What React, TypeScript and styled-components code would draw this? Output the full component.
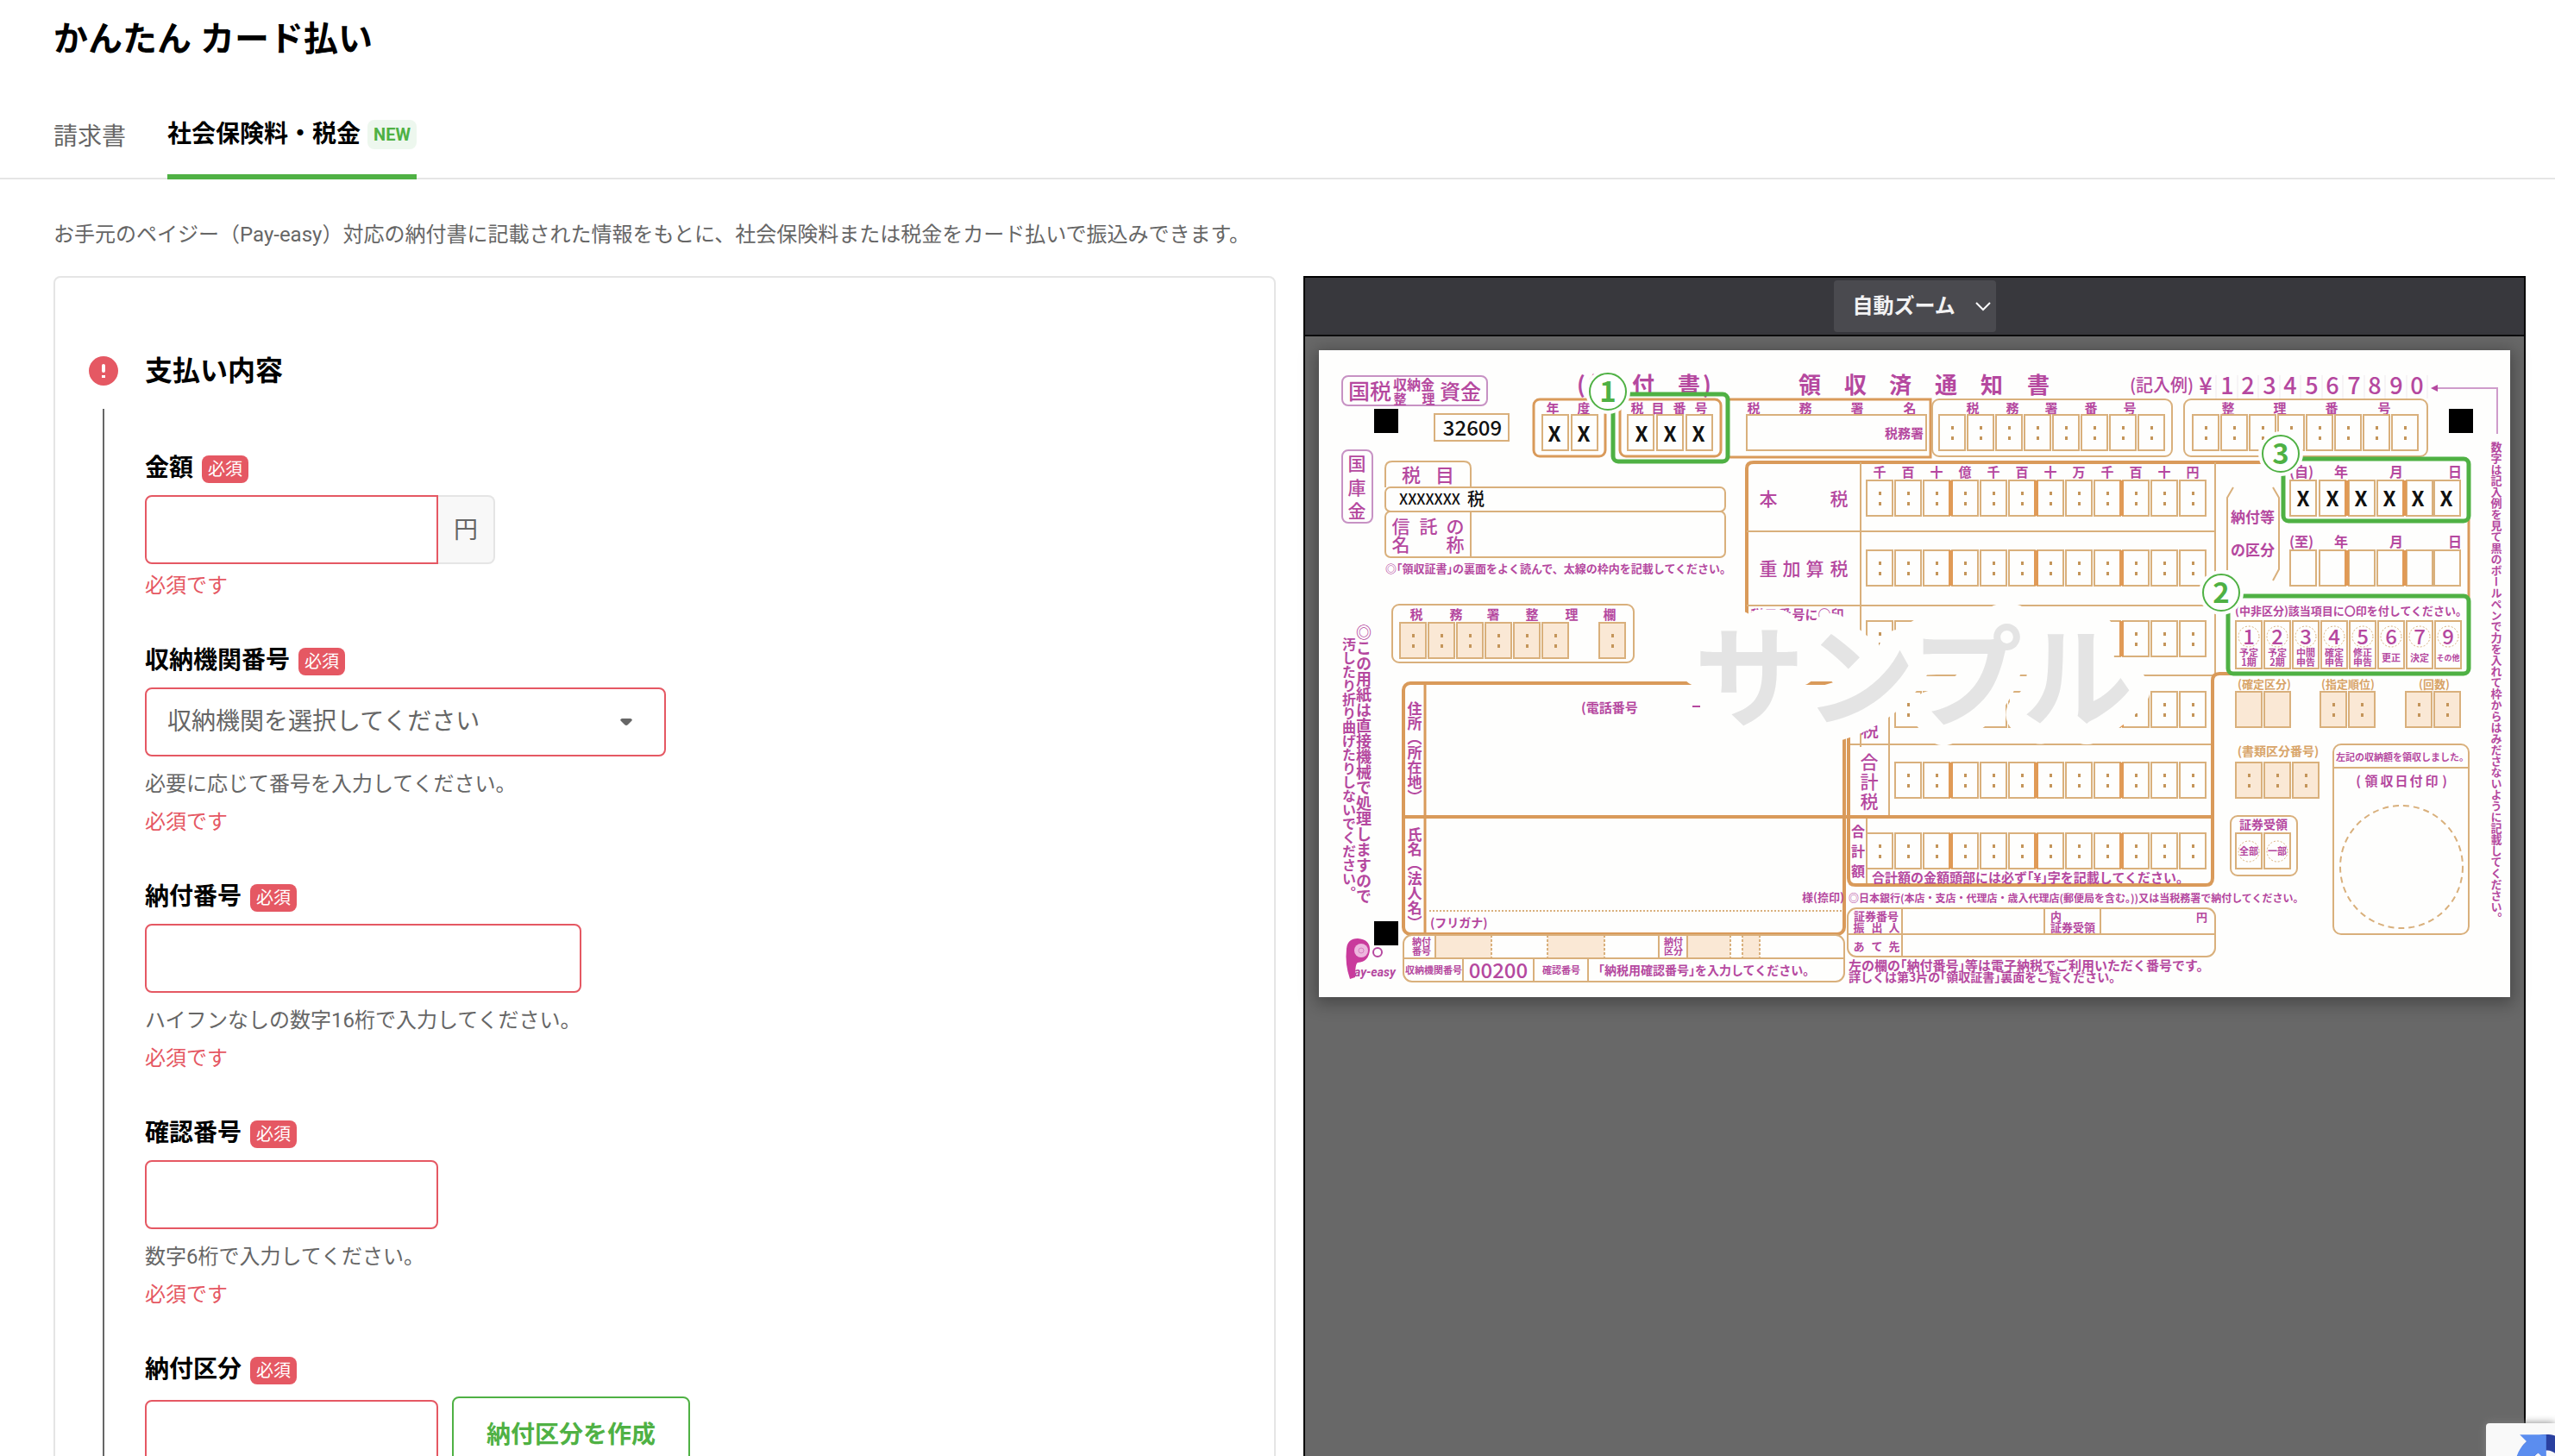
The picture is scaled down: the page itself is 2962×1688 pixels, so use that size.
import React from "react";
import styled, { createGlobalStyle } from "styled-components";

const GREEN = "#4fb144";
const RED = "#e55863";
const GRAY = "#666666";
const LINE = "#e5e5e5";

const GlobalStyle = createGlobalStyle`
  *, *::before, *::after { box-sizing: border-box; }
  body {
    margin: 0;
    background: #ffffff;
    color: #000000;
    font-family: Roboto, "Noto Sans CJK JP", sans-serif;
  }
  input, select, button { font-family: inherit; }
`;

const Page = styled.div`
  height: 100vh;
  overflow: hidden;
`;

const Title = styled.h1`
  margin: 0;
  padding: 16px 62px 30px;
  font-size: 40px;
  line-height: 60px;
  font-weight: 700;
`;

const Tabs = styled.nav`
  display: flex;
  gap: 48px;
  height: 102px;
  padding: 0 62px;
  border-bottom: 2px solid ${LINE};
`;

const Tab = styled.a<{ $active?: boolean }>`
  display: flex;
  align-items: center;
  gap: 8px;
  margin-bottom: -2px;
  padding-top: 3px;
  border-bottom: ${(p) => (p.$active ? `6px solid ${GREEN}` : "0")};
  color: ${(p) => (p.$active ? "#000000" : GRAY)};
  font-size: 28px;
  line-height: 40px;
  font-weight: ${(p) => (p.$active ? 700 : 400)};
  text-decoration: none;
`;

const NewBadge = styled.span`
  padding: 0 7px;
  border-radius: 8px;
  background: #edf7ee;
  color: ${GREEN};
  font-size: 20px;
  line-height: 34px;
`;

const Main = styled.main`
  padding: 40px 34px 0 62px;
`;

const Lead = styled.p`
  margin: 0 0 24px;
  color: ${GRAY};
  font-size: 24px;
  line-height: 48px;
`;

const Columns = styled.div`
  display: grid;
  grid-template-columns: 1fr 1fr;
  gap: 32px;
`;

const Card = styled.section`
  display: flex;
  gap: 30px;
  padding: 84px 38px;
  border: 2px solid ${LINE};
  border-radius: 8px;
`;

const StepRail = styled.div`
  display: flex;
  flex-direction: column;
  align-items: center;
  gap: 20px;
  width: 36px;
`;

const StepIcon = styled.div`
  display: flex;
  align-items: center;
  height: 48px;
`;

const StepLine = styled.div`
  flex: 1;
  width: 2px;
  background: ${GRAY};
`;

const StepBody = styled.form`
  flex: 1;
`;

const StepTitle = styled.h2`
  margin: 0 0 74px;
  font-size: 32px;
  line-height: 48px;
  font-weight: 700;
`;

const Fields = styled.div`
  display: flex;
  flex-direction: column;
  gap: 54px;
`;

const LabelRow = styled.label`
  display: flex;
  align-items: flex-start;
  gap: 10px;
  margin-bottom: 14px;
  font-size: 28px;
  line-height: 30px;
  font-weight: 700;
`;

const Required = styled.span`
  padding: 0 7px;
  border-radius: 8px;
  background: ${RED};
  color: #ffffff;
  font-size: 20px;
  line-height: 32px;
  font-weight: 400;
`;

const ControlRow = styled.div<{ $gap?: number }>`
  display: flex;
  align-items: center;
  gap: ${(p) => p.$gap ?? 0}px;
`;

const TextInput = styled.input<{ $wide?: boolean; $joined?: boolean }>`
  width: ${(p) => (p.$wide ? 506 : 340)}px;
  height: 80px;
  padding: 0 24px;
  border: 2px solid ${RED};
  border-radius: ${(p) => (p.$joined ? "8px 0 0 8px" : "8px")};
  background: #ffffff;
  font-size: 28px;
`;

const Unit = styled.span`
  display: flex;
  align-items: center;
  justify-content: center;
  width: 66px;
  height: 80px;
  padding-bottom: 4px;
  border: 2px solid ${LINE};
  border-left: 0;
  border-radius: 0 8px 8px 0;
  background: #f8f8f8;
  color: ${GRAY};
  font-size: 28px;
`;

const SelectBox = styled.div`
  position: relative;
  width: 604px;
`;

const Select = styled.select`
  appearance: none;
  width: 100%;
  height: 80px;
  padding: 0 64px 2px 24px;
  border: 2px solid ${RED};
  border-radius: 8px;
  background: #ffffff;
  color: ${GRAY};
  font-size: 28px;
`;

const Caret = styled.svg`
  position: absolute;
  top: 36px;
  right: 39px;
  pointer-events: none;
`;

const Help = styled.p`
  margin: 13px 0 0;
  color: ${GRAY};
  font-size: 24px;
  line-height: 38px;
`;

const ErrorText = styled.p`
  margin: 6px 0 -1px;
  color: ${RED};
  font-size: 24px;
  line-height: 38px;
`;

const OutlineButton = styled.button`
  height: 88px;
  padding: 0 38px 4px;
  border: 2px solid ${GREEN};
  border-radius: 8px;
  background: #ffffff;
  color: ${GREEN};
  font-size: 28px;
  font-weight: 700;
`;

const Viewer = styled.section`
  display: flex;
  flex-direction: column;
  border: 2px solid #000000;
  background: #686868;
`;

const Toolbar = styled.div`
  display: flex;
  align-items: center;
  justify-content: center;
  height: 68px;
  border-bottom: 2px solid #0c0c0d;
  background: #38383d;
`;

const ZoomBox = styled.div`
  position: relative;
  width: 188px;
`;

const ZoomSelect = styled.select`
  appearance: none;
  display: block;
  width: 100%;
  height: 60px;
  padding: 0 0 0 22px;
  border: 0;
  border-radius: 4px;
  background: #4a4a4f;
  color: #f2f2f3;
  font-size: 24px;
  font-weight: 700;
`;

const Chevron = styled.svg`
  position: absolute;
  top: 25px;
  right: 6px;
  pointer-events: none;
`;

const Sheet = styled.div`
  margin: 16px;
  background: #fefefd;
  box-shadow: 0 4px 18px 4px rgba(0, 0, 0, 0.3);

  svg { display: block; width: 100%; height: auto; }
`;

const Captcha = styled.div`
  position: fixed;
  right: 0;
  bottom: 0;
  width: 80px;
  height: 38px;
  padding: 13px 0 0 34px;
  overflow: hidden;
  border-radius: 4px 0 0 0;
  background: #f9f9f9;
`;

const CaptchaShadow = styled.div`
  position: fixed;
  right: 0;
  bottom: 0;
  width: 80px;
  height: 38px;
  border-radius: 4px 0 0 0;
  box-shadow: 0 0 10px #808080;
`;

/* ---- payment slip drawing ---- */

const PURPLE = "#b5489f";
const TAN = "#d9b07c";
const ORANGE = "#d99a5a";
const PEACH = "#fae8d5";

const weightFor = (s: number) => (s < 19 ? 700 : 500);
const drop = (s: number) => Math.round(s * 0.37);

type TxtProps = {
  x: number;
  y: number;
  s: number;
  children: string;
  c?: string;
  w?: number;
  mid?: boolean;
};

const Txt = ({ x, y, s, children, c = PURPLE, w = weightFor(s), mid }: TxtProps) => (
  <text x={x} y={y + drop(s)} fontSize={s} fontWeight={w} fill={c} textAnchor={mid ? "middle" : "start"}>
    {children}
  </text>
);

type SpreadProps = { t: string; xs: number[]; y: number; s: number; c?: string; w?: number };

const Spread = ({ t, xs, y, s, c = PURPLE, w = weightFor(s) }: SpreadProps) => (
  <text x={xs.join(" ")} y={y + drop(s)} fontSize={s} fontWeight={w} fill={c} textAnchor="middle">
    {t}
  </text>
);

type ColumnProps = { t: string; x: number; ys: number[]; s: number };

const Column = ({ t, x, ys, s }: ColumnProps) => (
  <text
    x={ys.map(() => x).join(" ")}
    y={ys.map((y) => y + drop(s)).join(" ")}
    fontSize={s}
    fontWeight={weightFor(s)}
    fill={PURPLE}
    textAnchor="middle"
  >
    {t}
  </text>
);

const Vertical = ({ x, y, s, children }: { x: number; y: number; s: number; children: string }) => (
  <text x={x} y={y} fontSize={s} fontWeight={weightFor(s)} fill={PURPLE} style={{ writingMode: "vertical-rl" }}>
    {children}
  </text>
);

const steps = (start: number, pitch: number, n: number) =>
  Array.from({ length: n }, (_, i) => Math.round(start + pitch * i));

type CellsProps = { xs: number[]; y: number; h?: number; dots?: boolean; fill?: string };

const Cells = ({ xs, y, h = 41, dots, fill = "none" }: CellsProps) => (
  <g>
    {xs.map((x) => (
      <g key={x}>
        <rect x={x} y={y} width={30} height={h} fill={fill} stroke={TAN} strokeWidth={2} />
        {dots && (
          <>
            <rect x={x + 14} y={y + 13} width={3} height={4} fill="#c4955a" />
            <rect x={x + 14} y={y + 25} width={3} height={4} fill="#c4955a" />
          </>
        )}
      </g>
    ))}
  </g>
);

type BoxProps = { x: number; y: number; x2: number; y2: number; r?: number; c?: string; sw?: number; fill?: string };

const Box = ({ x, y, x2, y2, r = 0, c = TAN, sw = 2, fill = "none" }: BoxProps) => (
  <rect x={x} y={y} width={x2 - x} height={y2 - y} rx={r} fill={fill} stroke={c} strokeWidth={sw} />
);

const Path = ({ d, c = TAN, sw = 2, dash }: { d: string; c?: string; sw?: number; dash?: string }) => (
  <path d={d} fill="none" stroke={c} strokeWidth={sw} strokeDasharray={dash} />
);

const Marker = ({ x, y, n }: { x: number; y: number; n: string }) => (
  <g>
    <circle cx={x} cy={y} r={26} fill="#fefefd" />
    <circle cx={x} cy={y} r={21} fill="#ffffff" stroke={GREEN} strokeWidth={2} />
    <text x={x} y={y + 12} fontSize={33} fontWeight={700} fill={GREEN} textAnchor="middle">
      {n}
    </text>
  </g>
);

const AMOUNT = steps(635, 33, 12);
const AMOUNT_ROWS = [
  { y: 151, from: 0 },
  { y: 232, from: 0 },
  { y: 314, from: 0 },
  { y: 396, from: 1 },
  { y: 478, from: 1 },
  { y: 560, from: 0 },
];
const DATE_CELLS = [1126, 1160, 1194, 1227, 1261, 1293];
const KINDS = [
  ["1", "予定", "1期"],
  ["2", "予定", "2期"],
  ["3", "中間", "申告"],
  ["4", "確定", "申告"],
  ["5", "修正", "申告"],
  ["6", "更正"],
  ["7", "決定"],
  ["9", "その他"],
];

const Slip = () => (
  <svg viewBox="0 0 1381 750" role="img" aria-label="納付書サンプル" fontFamily='"Noto Sans CJK JP", sans-serif'>
    <rect width={1381} height={750} fill="#fefefd" />

    {/* top left */}
    <Box x={27} y={30} x2={195} y2={64} r={7} c="#c792c4" />
    <Txt x={34} y={48} s={25}>国税</Txt>
    <Txt x={86} y={40} s={16}>収納金</Txt>
    <Spread t="整理" xs={[94, 127]} y={56} s={15} />
    <Txt x={140} y={48} s={24}>資金</Txt>
    <rect x={64} y={68} width={28} height={28} fill="#000000" />
    <Box x={134} y={74} x2={220} y2={105} />
    <Txt x={178} y={90} s={24} c="#111111" mid>32609</Txt>
    <Box x={27} y={116} x2={62} y2={200} r={7} c="#c792c4" />
    <Column t="国庫金" x={44} ys={[131, 159, 186]} s={21} />

    {/* titles */}
    <Spread t="(納付書)" xs={[304, 326, 376, 429, 450]} y={40} s={26} w={700} />
    <Spread t="領収済通知書" xs={[569, 622, 674, 727, 780, 834]} y={40} s={26} w={700} />
    <Txt x={940} y={41} s={20}>(記入例)</Txt>
    <Spread t="¥1234567890" xs={steps(1028, 24.5, 11)} y={41} s={27} w={500} />
    {steps(1040, 24.5, 11).map((x) => (
      <Path key={x} d={`M${x} 29V56`} c="#efeaee" sw={1} />
    ))}
    <Path d="M1292 44H1366V97" c="#cf9ccb" />
    <path d="M1289 44l8-4v8z" fill={PURPLE} />
    <rect x={1310} y={68} width={28} height={28} fill="#000000" />

    {/* year, tax item number */}
    <Box x={249} y={57} x2={332} y2={123} r={7} c={ORANGE} sw={3} />
    <Spread t="年度" xs={[271, 307]} y={67} s={15} />
    <Cells xs={[259, 293]} y={75} />
    <Spread t="XX" xs={[273, 307]} y={97} s={24} c="#111111" w={700} />
    <Box x={349} y={57} x2={466} y2={123} r={7} c={ORANGE} sw={3} />
    <Spread t="税目番号" xs={[369, 393, 418, 443]} y={67} s={15} />
    <Cells xs={[358, 392, 426]} y={75} />
    <Spread t="XXX" xs={[374, 407, 440]} y={97} s={24} c="#111111" w={700} />

    {/* tax office */}
    <Box x={474} y={57} x2={709} y2={124} c={ORANGE} sw={3} />
    <Spread t="税務署名" xs={[504, 564, 624, 685]} y={67} s={15} />
    <Box x={496} y={75} x2={704} y2={116} />
    <Txt x={656} y={96} s={15}>税務署</Txt>
    <Box x={711} y={57} x2={989} y2={123} r={8} />
    <Spread t="税務署番号" xs={[758, 804, 849, 895, 940]} y={67} s={15} />
    <Cells xs={steps(719, 33, 8)} y={75} dots />
    <Box x={1003} y={57} x2={1285} y2={123} r={8} />
    <Spread t="整理番号" xs={[1054, 1114, 1174, 1235]} y={67} s={15} />
    <Cells xs={steps(1013, 33, 8)} y={75} dots />
    <Box x={341} y={51} x2={474} y2={129} r={6} c={GREEN} sw={5} />

    {/* tax item */}
    <Path d="M77 159V137Q77 129 85 129H168Q176 129 176 137V159" />
    <Spread t="税目" xs={[107, 146]} y={145} s={22} />
    <Box x={77} y={159} x2={471} y2={187} r={6} />
    <Txt x={93} y={173} s={17} c="#111111" w={500}>XXXXXXX</Txt>
    <Txt x={172} y={173} s={20} c="#111111">税</Txt>
    <Box x={77} y={187} x2={471} y2={240} r={6} />
    <Path d="M176 187V240" />
    <Spread t="信託の" xs={[95, 127, 158]} y={204} s={21} />
    <Spread t="名称" xs={[95, 158]} y={225} s={21} />
    <Txt x={77} y={253} s={13}>◎｢領収証書｣の裏面をよく読んで、太線の枠内を記載してください。</Txt>

    {/* office use */}
    <Box x={85} y={295} x2={365} y2={362} r={8} />
    <Spread t="税務署整理欄" xs={[113, 159, 202, 247, 293, 337]} y={306} s={15} />
    <Cells xs={[94, 127, 160, 193, 226, 259, 325]} y={316} dots fill={PEACH} />

    {/* amount table */}
    <Path d="M496 320V137Q496 130 504 130H1120" c={ORANGE} sw={4} />
    <Path d="M628 130V460M496 210H1039M496 296H1039M614 377H1039M614 457H1036M1039 130V375M661 377V541M635 541V620" />
    <Path d="M614 350V612Q614 620 622 620H1028Q1036 620 1036 612V383Q1036 375 1044 375H1060M98 541H1036" c={ORANGE} sw={4} />
    <Path d="M1333 190V290" c={ORANGE} sw={3} />
    <Spread t="千百十億千百十万千百十円" xs={AMOUNT.map((x) => x + 15)} y={141} s={15} />
    {AMOUNT_ROWS.map((r) => (
      <g key={r.y}>
        <Cells xs={AMOUNT.slice(r.from)} y={r.y} dots />
        {[733, 832, 931].map((x) => (
          <rect key={x} x={x - 3} y={r.y} width={5} height={41} fill="#e09a56" />
        ))}
      </g>
    ))}
    <Spread t="本税" xs={[521, 603]} y={172} s={21} />
    <Spread t="重加算税" xs={[521, 548, 575, 603]} y={253} s={21} />
    <Spread t="税目番号に○印" xs={[508, 524, 540, 556, 571, 586, 601]} y={306} s={15} />
    <Txt x={628} y={440} s={21}>税</Txt>
    <Column t="合計税" x={638} ys={[477, 500, 523]} s={21} />
    <Column t="合計額" x={625} ys={[558, 581, 604]} s={16} />
    <Txt x={641} y={611} s={15}>合計額の金額頭部には必ず｢¥｣字を記載してください。</Txt>

    {/* payment period */}
    <Path d="M1060 159L1053 171V255M1106 159L1113 171V254L1106 267" />
    <Txt x={1057} y={194} s={17}>納付等</Txt>
    <Txt x={1057} y={232} s={17}>の区分</Txt>
    {[141, 222].map((y, i) => (
      <g key={y}>
        <Txt x={1125} y={y} s={16}>{i ? "(至)" : "(自)"}</Txt>
        <Spread t="年月日" xs={[1185, 1249, 1317]} y={y} s={16} />
        <Cells xs={DATE_CELLS} y={y + 10} />
        <rect x={1189} y={y + 10} width={5} height={41} fill="#e09a56" />
        <rect x={1256} y={y + 10} width={5} height={41} fill="#e09a56" />
      </g>
    ))}
    <Spread t="XXXXXX" xs={[1141, 1175, 1208, 1241, 1274, 1307]} y={172} s={24} c="#111111" w={700} />
    <Box x={1118} y={126} x2={1333} y2={198} r={6} c={GREEN} sw={5} />

    {/* filing kind */}
    <Txt x={1062} y={302} s={13}>(中非区分)該当項目に〇印を付してください。</Txt>
    <Cells xs={steps(1063, 33, 8)} y={314} h={55} />
    {KINDS.map(([n, a, b], i) => (
      <g key={n}>
        <circle cx={1078 + 33 * i} cy={332} r={12} fill="none" stroke={TAN} strokeDasharray="2 2" />
        <Txt x={1078 + 33 * i} y={332} s={24} mid>{n}</Txt>
        <Txt x={1078 + 33 * i} y={b ? 351 : 357} s={a.length > 2 ? 9 : 11} mid>{a}</Txt>
        {b && <Txt x={1078 + 33 * i} y={362} s={11} mid>{b}</Txt>}
      </g>
    ))}
    <Box x={1054} y={285} x2={1333} y2={375} r={6} c={GREEN} sw={5} />

    {/* right lower boxes */}
    <Txt x={1096} y={387} s={13} c="#d8a468" mid>(確定区分)</Txt>
    <Txt x={1193} y={387} s={13} c="#d8a468" mid>(指定順位)</Txt>
    <Txt x={1293} y={387} s={13} c="#d8a468" mid>(回数)</Txt>
    <Cells xs={[1063, 1096]} y={396} fill={PEACH} />
    <Cells xs={[1161, 1194, 1260, 1293]} y={396} fill={PEACH} dots />
    <Txt x={1112} y={465} s={14} c="#d8a468" mid>(書類区分番号)</Txt>
    <Cells xs={[1063, 1096, 1129]} y={478} fill={PEACH} dots />
    <Box x={1176} y={457} x2={1333} y2={677} r={9} />
    <Path d="M1176 484H1333" />
    <Txt x={1256} y={472} s={11} mid>左記の収納額を領収しました。</Txt>
    <Spread t="(領収日付印)" xs={[1205, 1220, 1238, 1255, 1272, 1290, 1305]} y={499} s={15} />
    <circle cx={1255} cy={599} r={71} fill="none" stroke={TAN} strokeWidth={2} strokeDasharray="7 5" />
    <Box x={1057} y={540} x2={1134} y2={609} r={8} />
    <Txt x={1095} y={550} s={14} mid>証券受領</Txt>
    <Cells xs={[1063, 1096]} y={560} />
    <circle cx={1078} cy={581} r={12} fill="none" stroke={TAN} strokeDasharray="2 2" />
    <circle cx={1111} cy={581} r={12} fill="none" stroke={TAN} strokeDasharray="2 2" />
    <Txt x={1078} y={581} s={11} mid>全部</Txt>
    <Txt x={1111} y={581} s={11} mid>一部</Txt>

    {/* notes under the amounts */}
    <Txt x={614} y={636} s={12}>◎日本銀行(本店・支店・代理店・歳入代理店(郵便局を含む。))又は当税務署で納付してください。</Txt>
    <Box x={613} y={647} x2={1039} y2={703} r={10} />
    <Path d="M613 677H1039M676 647V703M841 647V677M906 647V677" />
    <Txt x={620} y={656} s={13}>証券番号</Txt>
    <Spread t="振出人" xs={[626, 647, 667]} y={669} s={13} />
    <Spread t="あて先" xs={[626, 647, 667]} y={691} s={13} />
    <Txt x={848} y={656} s={13}>内</Txt>
    <Txt x={848} y={669} s={13}>証券受領</Txt>
    <Txt x={1017} y={657} s={13}>円</Txt>
    <Txt x={614} y={713} s={15}>左の欄の｢納付番号｣等は電子納税でご利用いただく番号です。</Txt>
    <Txt x={614} y={727} s={14}>詳しくは第3片の｢領収証書｣裏面をご覧ください。</Txt>

    {/* address and name */}
    <Box x={98} y={386} x2={609} y2={677} r={8} c={ORANGE} sw={4} />
    <Path d="M123 386V677" c={ORANGE} sw={3} />
    <Vertical x={111} y={407} s={17}>住所（所在地）</Vertical>
    <Vertical x={111} y={553} s={17}>氏名（法人名）</Vertical>
    <Txt x={304} y={414} s={15}>(電話番号</Txt>
    <Path d="M433 413H442" c={PURPLE} />
    <Txt x={560} y={634} s={13}>様(捺印)</Txt>
    <Path d="M128 650H607" dash="2 2" />
    <Txt x={129} y={664} s={14}>(フリガナ)</Txt>

    {/* bottom strip */}
    <path d="M135 678H200V705H135ZM265 678H331V705H265ZM427 678H477V705H427ZM491 678H511V705H491Z" fill={PEACH} />
    <Box x={98} y={678} x2={609} y2={732} r={10} />
    <Path d="M98 705H609M135 678V705M394 678V705M427 678V705M167 705V732M249 705V732M312 705V732" />
    <Path d="M200 678V705M265 678V705M331 678V705M477 678V705M491 678V705M511 678V705" dash="3 2" />
    <Txt x={108} y={686} s={11}>納付</Txt>
    <Txt x={108} y={697} s={11}>番号</Txt>
    <Txt x={400} y={686} s={11}>納付</Txt>
    <Txt x={400} y={697} s={11}>区分</Txt>
    <Txt x={100} y={719} s={11}>収納機関番号</Txt>
    <Txt x={208} y={719} s={24} mid>00200</Txt>
    <Txt x={259} y={719} s={11}>確認番号</Txt>
    <Txt x={324} y={719} s={14}>｢納税用確認番号｣を入力してください。</Txt>

    {/* side notes */}
    <Vertical x={52} y={318} s={18}>◎この用紙は直接機械で処理しますので</Vertical>
    <Vertical x={35} y={333} s={16}>汚したり折り曲げたりしないでください。</Vertical>
    <Vertical x={1365} y={106} s={13}>
      数字は記入例を見て黒のボールペンで力を入れて枠からはみださないように記載してください。
    </Vertical>

    {/* Pay-easy mark */}
    <rect x={64} y={662} width={28} height={28} fill="#000000" />
    <path d="M32 694Q33 682 45 682Q59 683 59 695Q58 709 45 710Q42 711 42 727L36 729Q30 712 32 694Z" fill="#c93a9c" />
    <circle cx={49} cy={696} r={8} fill="#edb6de" />
    <circle cx={49} cy={696} r={3} fill="none" stroke="#d77fc0" />
    <circle cx={68} cy={698} r={5} fill="none" stroke={PURPLE} strokeWidth={2} />
    <text x={41} y={726} fontSize={14} fontWeight={700} fontStyle="italic" fill={PURPLE} fontFamily="Roboto, sans-serif">
      ay-easy
    </text>

    {/* watermark */}
    <text
      x={435}
      y={427}
      fontSize={128}
      fontWeight={700}
      fill="#e4e4e4"
      stroke="#fefefd"
      strokeWidth={48}
      strokeLinejoin="round"
      paintOrder="stroke"
    >
      サンプル
    </text>

    <Marker x={335} y={48} n="1" />
    <Marker x={1046} y={281} n="2" />
    <Marker x={1115} y={120} n="3" />
  </svg>
);

type FieldProps = {
  id: string;
  label: string;
  help?: string;
  error?: string;
  children: React.ReactNode;
};

const Field = ({ id, label, help, error = "必須です", children }: FieldProps) => (
  <div>
    <LabelRow htmlFor={id}>
      {label}
      <Required>必須</Required>
    </LabelRow>
    {children}
    {help && <Help>{help}</Help>}
    <ErrorText>{error}</ErrorText>
  </div>
);

export default function App() {
  return (
    <Page>
      <GlobalStyle />
      <Title>かんたん カード払い</Title>
      <Tabs>
        <Tab href="#invoice">請求書</Tab>
        <Tab href="#tax" $active aria-current="page">
          社会保険料・税金
          <NewBadge>NEW</NewBadge>
        </Tab>
      </Tabs>
      <Main>
        <Lead>
          お手元のペイジー（Pay-easy）対応の納付書に記載された情報をもとに、社会保険料または税金をカード払いで振込みできます。
        </Lead>
        <Columns>
          <Card>
            <StepRail>
              <StepIcon>
                <svg width="34" height="34" viewBox="0 0 34 34" aria-hidden="true">
                  <circle cx="17" cy="17" r="17" fill={RED} />
                  <path d="M17 11V17" stroke="#ffffff" strokeWidth="4" strokeLinecap="round" />
                  <rect x="15" y="22" width="4" height="3" fill="#ffffff" />
                </svg>
              </StepIcon>
              <StepLine />
            </StepRail>
            <StepBody>
              <StepTitle>支払い内容</StepTitle>
              <Fields>
                <Field id="amount" label="金額">
                  <ControlRow>
                    <TextInput id="amount" inputMode="numeric" $joined />
                    <Unit>円</Unit>
                  </ControlRow>
                </Field>
                <Field id="agency" label="収納機関番号" help="必要に応じて番号を入力してください。">
                  <SelectBox>
                    <Select id="agency">
                      <option>収納機関を選択してください</option>
                    </Select>
                    <Caret width="14" height="8" viewBox="0 0 14 8" aria-hidden="true">
                      <path d="M2 0H12Q15 1 13 3L9 7Q7 9 5 7L1 3Q-1 1 2 0Z" fill={GRAY} />
                    </Caret>
                  </SelectBox>
                </Field>
                <Field id="payment-number" label="納付番号" help="ハイフンなしの数字16桁で入力してください。">
                  <ControlRow>
                    <TextInput id="payment-number" inputMode="numeric" $wide />
                  </ControlRow>
                </Field>
                <Field id="confirm-number" label="確認番号" help="数字6桁で入力してください。">
                  <ControlRow>
                    <TextInput id="confirm-number" inputMode="numeric" />
                  </ControlRow>
                </Field>
                <Field id="category" label="納付区分">
                  <ControlRow $gap={16}>
                    <TextInput id="category" />
                    <OutlineButton type="button">納付区分を作成</OutlineButton>
                  </ControlRow>
                </Field>
              </Fields>
            </StepBody>
          </Card>
          <Viewer>
            <Toolbar>
              <ZoomBox>
                <ZoomSelect aria-label="ズーム">
                  <option>自動ズーム</option>
                </ZoomSelect>
                <Chevron width="18" height="12" viewBox="0 0 18 12" aria-hidden="true">
                  <path d="M1 1L9 9L17 1" fill="none" stroke="#f9f9fa" strokeWidth="2" />
                </Chevron>
              </ZoomBox>
            </Toolbar>
            <Sheet>
              <Slip />
            </Sheet>
          </Viewer>
        </Columns>
      </Main>
      <CaptchaShadow />
      <Captcha>
        <svg width="72" height="72" viewBox="0 0 64 64" aria-hidden="true">
          <path
            fill="#2a40a0"
            d="M64 31.955l-.033-1.37V4.687l-7.16 7.16C50.948 4.674 42.033.093 32.05.093c-10.4 0-19.622 4.96-25.458 12.64l11.736 11.86a15.55 15.55 0 0 1 4.754-5.334c2.05-1.6 4.952-2.906 8.968-2.906.485 0 .86.057 1.135.163 4.976.393 9.288 3.14 11.828 7.124l-8.307 8.307L64 31.953"
          />
          <path
            fill="#5b8def"
            d="M31.862.094l-1.37.033H4.594l7.16 7.16C4.58 13.147 0 22.06 0 32.046c0 10.4 4.96 19.622 12.64 25.458L24.5 45.768a15.55 15.55 0 0 1-5.334-4.754c-1.6-2.05-2.906-4.952-2.906-8.968 0-.485.057-.86.163-1.135.393-4.976 3.14-9.288 7.124-11.828l8.307 8.307L31.86.095"
          />
        </svg>
      </Captcha>
    </Page>
  );
}
